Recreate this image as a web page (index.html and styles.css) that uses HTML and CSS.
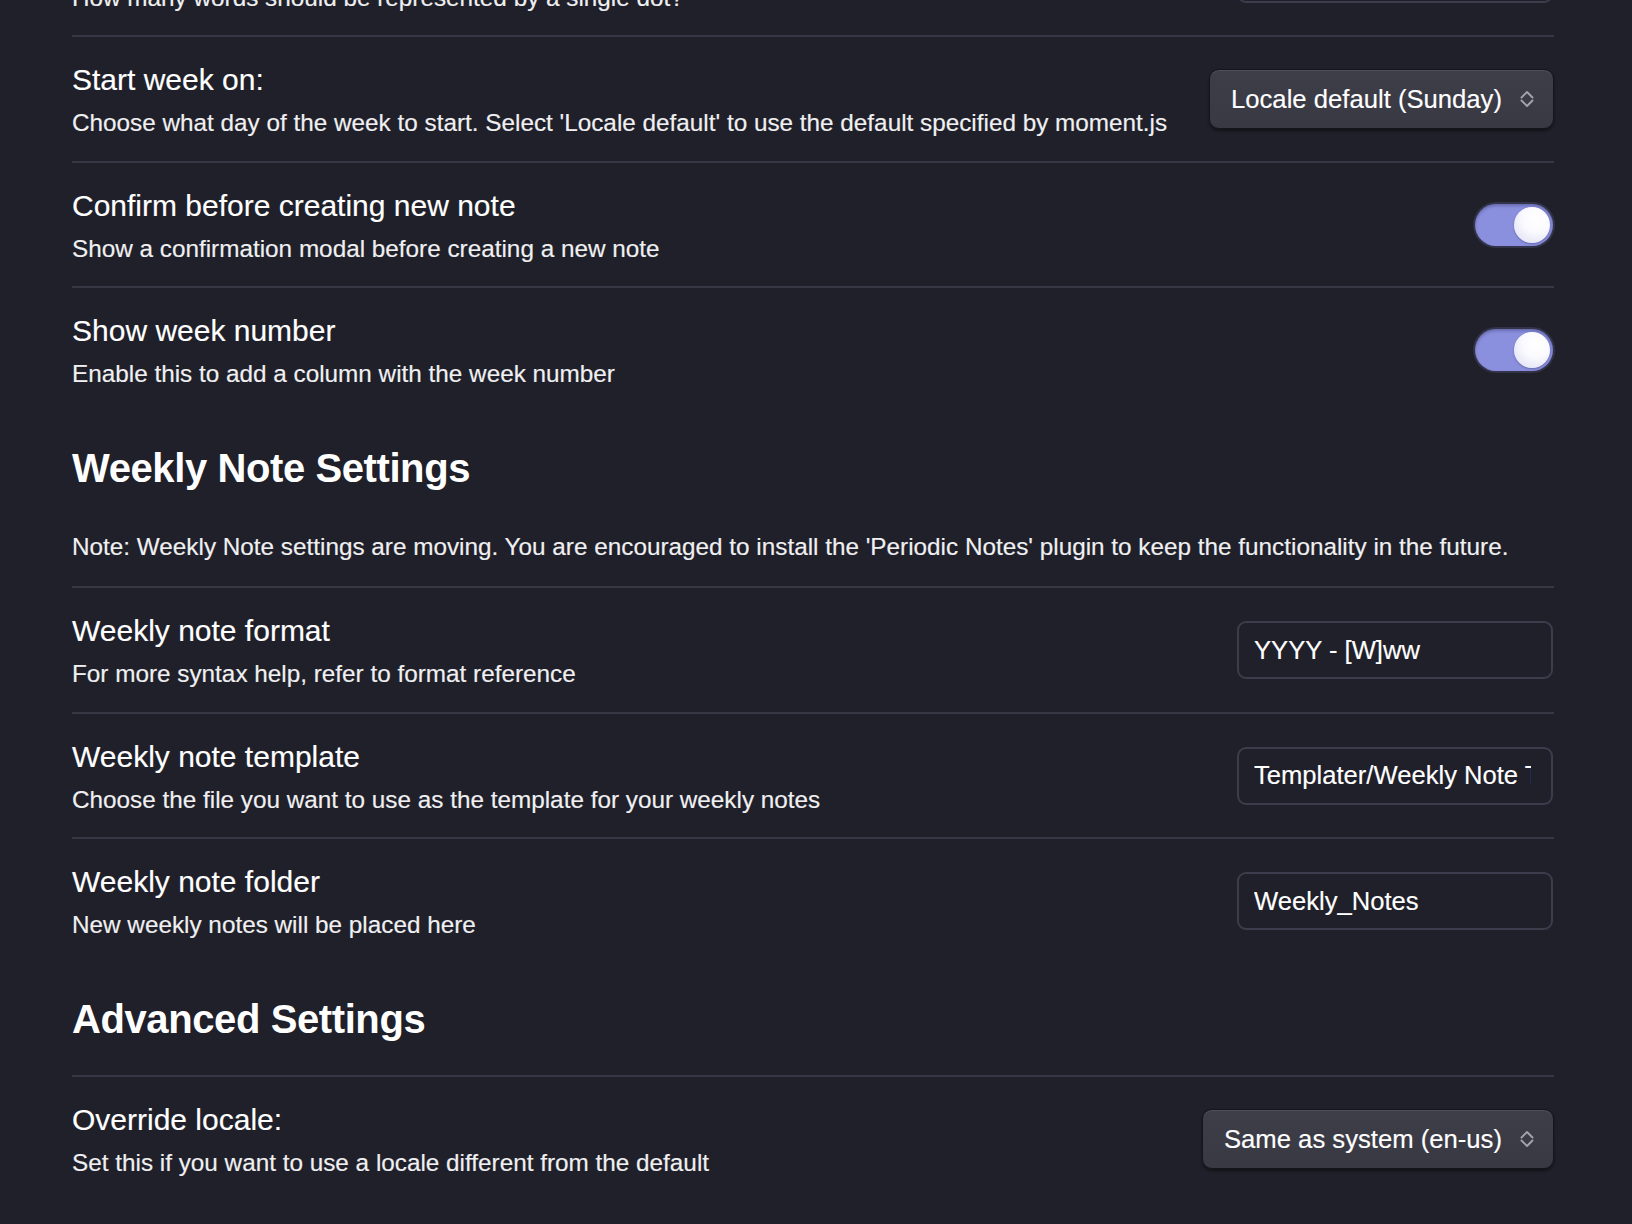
FILE: index.html
```html
<!DOCTYPE html>
<html lang="en">
<head>
<meta charset="utf-8">
<title>Calendar settings</title>
<link rel="stylesheet" href="styles.css">
</head>
<body>
<main class="settings">
  <div class="setting-item">
    <div class="info">
      <div class="name">Words per dot</div>
      <div class="desc">How many words should be represented by a single dot?</div>
    </div>
    <input class="text-input" type="text" value="250">
  </div>

  <div class="setting-item">
    <div class="info">
      <div class="name">Start week on:</div>
      <div class="desc">Choose what day of the week to start. Select 'Locale default' to use the default specified by moment.js</div>
    </div>
    <div class="dropdown">
      <span>Locale default (Sunday)</span>
      <svg class="chev" width="14" height="20" viewBox="0 0 14 20"><path d="M1.5 8.5 L7 3 L12.5 8.5 M1.5 11.5 L7 17 L12.5 11.5" fill="none" stroke="#a3a3ad" stroke-width="1.9" stroke-linecap="round" stroke-linejoin="round"/></svg>
    </div>
  </div>

  <div class="setting-item">
    <div class="info">
      <div class="name">Confirm before creating new note</div>
      <div class="desc">Show a confirmation modal before creating a new note</div>
    </div>
    <div class="toggle is-enabled"><span class="knob"></span></div>
  </div>

  <div class="setting-item">
    <div class="info">
      <div class="name">Show week number</div>
      <div class="desc">Enable this to add a column with the week number</div>
    </div>
    <div class="toggle is-enabled"><span class="knob"></span></div>
  </div>

  <h3 class="section-heading">Weekly Note Settings</h3>
  <p class="note">Note: Weekly Note settings are moving. You are encouraged to install the 'Periodic Notes' plugin to keep the functionality in the future.</p>

  <div class="setting-item">
    <div class="info">
      <div class="name">Weekly note format</div>
      <div class="desc">For more syntax help, refer to format reference</div>
    </div>
    <input class="text-input" type="text" value="YYYY - [W]ww">
  </div>

  <div class="setting-item">
    <div class="info">
      <div class="name">Weekly note template</div>
      <div class="desc">Choose the file you want to use as the template for your weekly notes</div>
    </div>
    <input class="text-input" type="text" value="Templater/Weekly Note Template">
  </div>

  <div class="setting-item">
    <div class="info">
      <div class="name">Weekly note folder</div>
      <div class="desc">New weekly notes will be placed here</div>
    </div>
    <input class="text-input" type="text" value="Weekly_Notes">
  </div>

  <h3 class="section-heading">Advanced Settings</h3>

  <div class="setting-item">
    <div class="info">
      <div class="name">Override locale:</div>
      <div class="desc">Set this if you want to use a locale different from the default</div>
    </div>
    <div class="dropdown">
      <span>Same as system (en-us)</span>
      <svg class="chev" width="14" height="20" viewBox="0 0 14 20"><path d="M1.5 8.5 L7 3 L12.5 8.5 M1.5 11.5 L7 17 L12.5 11.5" fill="none" stroke="#a3a3ad" stroke-width="1.9" stroke-linecap="round" stroke-linejoin="round"/></svg>
    </div>
  </div>
</main>
</body>
</html>
```
FILE: styles.css
```css
html, body {
  margin: 0;
  padding: 0;
  background: #20202a;
  height: 100%;
  overflow: hidden;
}

body {
  font-family: "Liberation Sans", Arial, sans-serif;
  color: #ffffff;
}

.settings {
  display: flex;
  flex-direction: column;
  margin: -90.5px 78px 0 72px;
}

.setting-item {
  display: flex;
  align-items: center;
  border-top: 2px solid #363644;
  padding: 21px 0 20.5px;
}

.info {
  flex: 1 1 auto;
  min-width: 0;
  padding-top: 4px;
  margin-right: 24px;
}

.name {
  font-size: 30px;
  line-height: 36px;
  color: #ffffff;
  -webkit-text-stroke: 0.15px #ffffff;
}

.desc {
  margin-top: 8px;
  font-size: 24.3px;
  line-height: 34px;
  color: #f0f0f2;
  -webkit-text-stroke: 0.15px #f0f0f2;
}

.section-heading {
  margin: 32px 0 32.5px;
  font-size: 40px;
  line-height: 48px;
  font-weight: 700;
  letter-spacing: -0.4px;
  color: #ffffff;
}

.note {
  margin: 5.5px 0 22.5px;
  font-size: 24.3px;
  line-height: 34px;
  color: #f0f0f2;
  -webkit-text-stroke: 0.15px #f0f0f2;
}

.text-input {
  box-sizing: border-box;
  flex: 0 0 auto;
  width: 316px;
  height: 58px;
  margin: 0 1px 0 0;
  padding: 0 20px 0 15px;
  border: 2px solid #3c3c4d;
  border-radius: 9px;
  background: transparent;
  color: #ffffff;
  font-family: "Liberation Sans", Arial, sans-serif;
  font-size: 25.6px;
  -webkit-text-stroke: 0.15px #ffffff;
  outline: none;
}

.dropdown {
  flex: 0 0 auto;
  display: flex;
  align-items: center;
  gap: 18px;
  box-sizing: border-box;
  height: 60px;
  padding: 0 19px 0 21px;
  border: 1px solid #15151b;
  border-radius: 10px;
  background: linear-gradient(#3e3e49, #393944);
  box-shadow: inset 0 1px 0 rgba(255, 255, 255, 0.09), 0 2px 3px rgba(0, 0, 0, 0.45);
  font-size: 25.66px;
  color: #ffffff;
  -webkit-text-stroke: 0.15px #ffffff;
  white-space: nowrap;
}

.chev {
  display: block;
  flex: 0 0 auto;
}

.toggle {
  flex: 0 0 auto;
  position: relative;
  box-sizing: border-box;
  width: 78px;
  height: 42px;
  margin-right: 1px;
  border-radius: 21px;
  background: #8b90de;
  box-shadow: 0 0 0 2px #33334a, inset 0 2px 3px rgba(40, 40, 90, 0.35);
}

.knob {
  position: absolute;
  top: 3px;
  right: 3px;
  width: 36px;
  height: 36px;
  border-radius: 50%;
  background: radial-gradient(circle at 62% 32%, #ffffff 0%, #fbfbff 38%, #dcdcf3 100%);
  box-shadow: 0 1px 2px rgba(30, 30, 70, 0.35);
}
```
